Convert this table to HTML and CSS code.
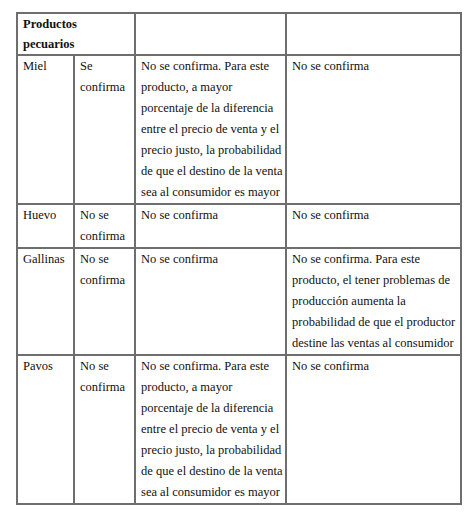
FILE: index.html
```html
<!DOCTYPE html>
<html lang="es">
<head>
<meta charset="utf-8">
<title>Productos pecuarios</title>
<link rel="stylesheet" href="styles.css">
</head>
<body>
<table class="tabla">
  <colgroup>
    <col class="c1">
    <col class="c2">
    <col class="c3">
    <col class="c4">
  </colgroup>
  <tbody>
    <tr class="r-head">
      <td class="head" colspan="2">Productos pecuarios</td>
      <td></td>
      <td></td>
    </tr>
    <tr class="r7">
      <td>Miel</td>
      <td>Se confirma</td>
      <td>No se confirma. Para este producto, a mayor porcentaje de la diferencia entre el precio de venta y el precio justo, la probabilidad de que el destino de la venta sea al consumidor es mayor</td>
      <td>No se confirma</td>
    </tr>
    <tr class="r2">
      <td>Huevo</td>
      <td>No se confirma</td>
      <td>No se confirma</td>
      <td>No se confirma</td>
    </tr>
    <tr class="r5">
      <td>Gallinas</td>
      <td>No se confirma</td>
      <td>No se confirma</td>
      <td>No se confirma. Para este producto, el tener problemas de producción aumenta la probabilidad de que el productor destine las ventas al consumidor</td>
    </tr>
    <tr class="r7">
      <td>Pavos</td>
      <td>No se confirma</td>
      <td>No se confirma. Para este producto, a mayor porcentaje de la diferencia entre el precio de venta y el precio justo, la probabilidad de que el destino de la venta sea al consumidor es mayor</td>
      <td>No se confirma</td>
    </tr>
  </tbody>
</table>
</body>
</html>
```
FILE: styles.css
```css
html, body {
  margin: 0;
  padding: 0;
  background: #ffffff;
}

body {
  padding: 12px 0 0 16px;
  font-family: "Liberation Serif", "Times New Roman", serif;
  font-size: 12.5px;
  line-height: 21px;
  color: #111111;
}

.tabla {
  border-collapse: collapse;
  table-layout: fixed;
  width: 444px;
}

.c1 { width: 57px; }
.c2 { width: 61px; }
.c3 { width: 151px; }
.c4 { width: 175px; }

.tabla td {
  border: 2px solid #6e6e6e;
  padding: 0 0 0 5px;
  vertical-align: top;
  text-align: left;
}

.tabla td.head {
  font-weight: bold;
  line-height: 20px;
  padding-right: 20px;
}
```
